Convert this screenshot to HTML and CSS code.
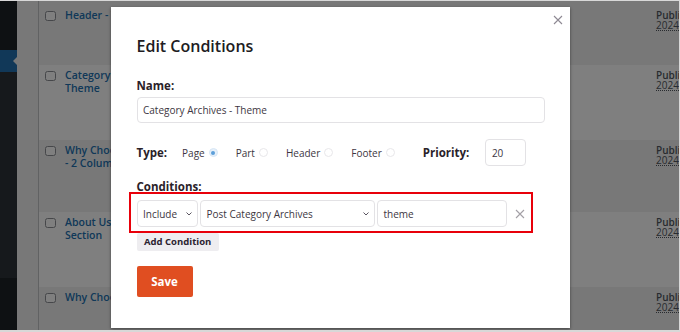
FILE: index.html
```html
<!DOCTYPE html>
<html lang="en">
<head>
    <meta charset="UTF-8">
    <meta name="viewport" content="width=device-width, initial-scale=1.0">
    <title>Edit Conditions</title>
    <link rel="stylesheet" href="styles.css">
</head>
<body>
<div class="screen">

    <!-- admin sidebar -->
    <aside class="sidebar">
        <div class="menu-top"></div>
        <div class="menu-current"><span class="menu-arrow"></span></div>
        <div class="submenu"></div>
        <div class="menu-bottom"></div>
    </aside>

    <!-- list table behind the modal -->
    <main class="content">
        <div class="list">
            <div class="row row-first">
                <span class="check"></span>
                <a class="row-title">Header - Theme</a>
                <span></span>
                <div class="row-date"><strong>Published</strong><abbr>2024/05/02 at 9:14 am</abbr></div>
            </div>
            <div class="row">
                <span class="check"></span>
                <a class="row-title">Category Archives - Theme</a>
                <span></span>
                <div class="row-date"><strong>Published</strong><abbr>2024/05/02 at 9:12 am</abbr></div>
            </div>
            <div class="row">
                <span class="check"></span>
                <a class="row-title">Why Choose Us Block - 2 Columns</a>
                <span></span>
                <div class="row-date"><strong>Published</strong><abbr>2024/04/29 at 3:40 pm</abbr></div>
            </div>
            <div class="row">
                <span class="check"></span>
                <a class="row-title">About Us Content Section</a>
                <span></span>
                <div class="row-date"><strong>Published</strong><abbr>2024/04/29 at 3:31 pm</abbr></div>
            </div>
            <div class="row">
                <span class="check"></span>
                <a class="row-title">Why Choose Us Block</a>
                <span></span>
                <div class="row-date"><strong>Published</strong><abbr>2024/04/28 at 1:05 pm</abbr></div>
            </div>
        </div>
    </main>

    <div class="backdrop"></div>

    <!-- Edit Conditions modal -->
    <div class="modal">
        <button class="modal-close" aria-label="Close">
            <svg width="10" height="10" viewBox="0 0 10 10"><path d="M1 1 L9 9 M9 1 L1 9" stroke="#8e8993" stroke-width="1.1" fill="none"/></svg>
        </button>

        <h2 class="modal-title">Edit Conditions</h2>

        <div class="field-label">Name:</div>
        <div class="text-input name-input">Category Archives - Theme</div>

        <div class="type-row">
            <span class="field-label type-label">Type:</span>
            <span class="radio">Page <span class="radio-dot checked"></span></span>
            <span class="radio">Part <span class="radio-dot"></span></span>
            <span class="radio">Header <span class="radio-dot"></span></span>
            <span class="radio">Footer <span class="radio-dot"></span></span>
            <span class="field-label priority-label">Priority:</span>
            <div class="text-input priority-input">20</div>
        </div>

        <div class="field-label conditions-label">Conditions:</div>
        <div class="condition-row">
            <div class="select select-include">Include
                <svg width="6" height="4" viewBox="0 0 6 4"><path d="M0.5 0.5 L3 3 L5.5 0.5" stroke="#5a5560" stroke-width="1" fill="none"/></svg>
            </div>
            <div class="select select-rule">Post Category Archives
                <svg width="6" height="4" viewBox="0 0 6 4"><path d="M0.5 0.5 L3 3 L5.5 0.5" stroke="#5a5560" stroke-width="1" fill="none"/></svg>
            </div>
            <div class="text-input value-input">theme</div>
            <span class="remove">
                <svg width="10" height="10" viewBox="0 0 10 10"><path d="M1 1 L9 9 M9 1 L1 9" stroke="#a3a0a6" stroke-width="1.1" fill="none"/></svg>
            </span>
            <div class="highlight"></div>
        </div>

        <button class="add-btn">Add Condition</button>
        <button class="save-btn">Save</button>
    </div>

</div>
</body>
</html>
```

FILE: styles.css
```css
:root {
    --sidebar-bg: #1d2327;
    --sidebar-sub: #2c3338;
    --wp-blue: #2271b1;
    --page-bg: #f0f0f1;
    --label: #2a2229;
    --text: #3d3642;
    --field-border: #e3e2e5;
    --save: #e04e21;
}

* { box-sizing: border-box; }

html, body {
    margin: 0;
    height: 100%;
}

body {
    background: #d8d8d8;
    font-family: "Open Sans", "Liberation Sans", sans-serif;
    overflow: hidden;
}

.screen {
    position: relative;
    display: flex;
    height: 329px;
    margin: 1px 1px 0 0;
    overflow: hidden;
}

/* --- Sidebar --- */
.sidebar {
    width: 17px;
    flex-shrink: 0;
    display: flex;
    flex-direction: column;
    background: var(--sidebar-bg);
}

.menu-top { height: 49px; }

.menu-current {
    height: 22px;
    background: var(--wp-blue);
    position: relative;
}

.menu-arrow {
    position: absolute;
    right: 0;
    top: 7px;
    border-top: 4.5px solid transparent;
    border-bottom: 4.5px solid transparent;
    border-right: 4px solid var(--page-bg);
}

.submenu {
    height: 206px;
    background: var(--sidebar-sub);
}

/* --- List table --- */
.content {
    flex: 1;
    background: var(--page-bg);
    padding-left: 21px;
    overflow: hidden;
}

.list {
    width: 718px;
    height: 100%;
    border-left: 1px solid #c3c4c7;
    background: #fff;
}

.row {
    display: grid;
    grid-template-columns: 20px 111px 1fr 100px;
    padding: 4px 0 0 6px;
    height: 75px;
    background: #fff;
}

.row:nth-child(odd) { background: #f0f0f1; }
.row-first { height: 64px; padding-top: 8px; }
.row:nth-child(3) { height: 72px; }

.check {
    width: 11px;
    height: 10px;
    margin-top: 2px;
    border: 1px solid #8c8f94;
    border-radius: 2.5px;
    background: #fff;
}

.row-title {
    color: var(--wp-blue);
    font-size: 10.5px;
    font-weight: 600;
    line-height: 13px;
}

.row-date {
    margin-top: 0.5px;
    font-size: 10px;
    line-height: 10.5px;
    color: #50575e;
    white-space: nowrap;
}

.row-date strong {
    display: block;
    font-weight: 600;
}

.row-date abbr {
    text-decoration: underline dotted;
}

.backdrop {
    position: absolute;
    inset: 0;
    background: rgba(0, 0, 0, 0.5);
}

/* --- Modal --- */
.modal {
    position: absolute;
    left: 111px;
    top: 6px;
    width: 459px;
    height: 321px;
    padding: 28px 25px 0 25.5px;
    background: #fff;
    box-shadow: 0 1px 3px rgba(0, 0, 0, 0.45);
}

.modal-close {
    position: absolute;
    top: 7.5px;
    right: 7.5px;
    padding: 0;
    border: 0;
    background: none;
    display: flex;
}

.modal-title {
    margin: 0 0 21px;
    font-size: 16px;
    font-weight: 600;
    line-height: 22px;
    color: #211c22;
}

.field-label {
    font-size: 11.5px;
    font-weight: 700;
    line-height: 16px;
    color: var(--label);
}

.text-input,
.select {
    display: flex;
    align-items: center;
    border: 1px solid var(--field-border);
    border-radius: 4px;
    background: #fff;
    font-size: 10px;
    color: var(--text);
    padding: 0 5.5px;
}

.name-input {
    margin-top: 2.5px;
    height: 26px;
}

.type-row {
    display: flex;
    align-items: center;
    height: 27px;
    margin-top: 16.5px;
}

.type-label { margin-right: 15px; }

.radio {
    display: flex;
    align-items: center;
    gap: 4px;
    margin-right: 18px;
    font-size: 10px;
    color: var(--text);
}

.radio-dot {
    width: 9px;
    height: 9px;
    border: 1px solid #e8e7ea;
    border-radius: 50%;
    position: relative;
}

.radio-dot.checked {
    border-color: #d7e6f5;
    background: #e6f0fa;
}

.radio-dot.checked::after {
    content: '';
    position: absolute;
    left: 1.5px;
    top: 1.5px;
    width: 4px;
    height: 4px;
    border-radius: 50%;
    background: #5d9fd9;
}

.priority-label {
    margin-left: 10px;
    margin-right: 16px;
}

.priority-input {
    width: 41px;
    height: 27px;
}

.conditions-label { margin-top: 12.5px; }

.condition-row {
    position: relative;
    display: flex;
    align-items: center;
    gap: 2px;
    margin-top: 5.5px;
    height: 27px;
}

.select {
    height: 27px;
    justify-content: space-between;
}

.select-include { width: 61.5px; }
.select-rule { width: 175px; }

.value-input {
    width: 129.5px;
    height: 27px;
}

.remove {
    display: flex;
    margin-left: 6px;
}

.highlight {
    position: absolute;
    left: -7.5px;
    right: 12px;
    top: -8.5px;
    bottom: -5.5px;
    border: 2px solid #e8000a;
}

.add-btn {
    display: block;
    margin-top: 5.5px;
    height: 18px;
    padding: 0 7.5px;
    border: 0;
    border-radius: 2px;
    background: #eeedf0;
    font-family: inherit;
    font-size: 9.5px;
    font-weight: 700;
    color: #2c2430;
}

.save-btn {
    display: block;
    margin-top: 15px;
    width: 56px;
    height: 31.5px;
    border: 0;
    border-radius: 2px;
    background: var(--save);
    font-family: inherit;
    font-size: 11.5px;
    font-weight: 700;
    color: #fff;
}
```
